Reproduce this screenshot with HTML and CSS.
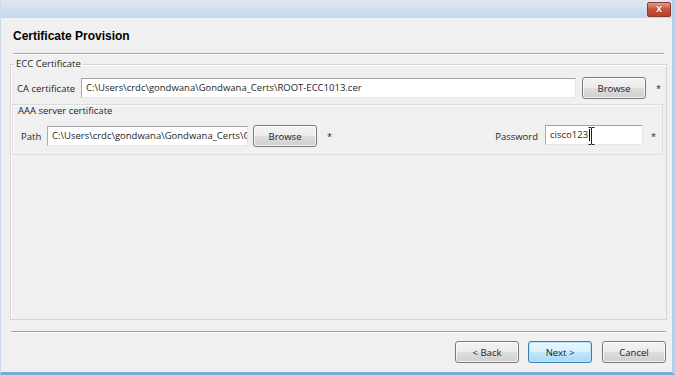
FILE: index.html
```html
<!DOCTYPE html>
<html>
<head>
<meta charset="utf-8">
<link rel="stylesheet" href="styles.css">
</head>
<body>
<div class="window">
  <div class="titlebar">
    <div class="close"><span>x</span></div>
  </div>
  <div class="content">
    <div class="header">Certificate Provision</div>
    <div class="sep top-sep"></div>
    <fieldset class="group">
      <legend>ECC Certificate</legend>
      <div class="row ca-row">
        <span class="label ca-label">CA certificate</span>
        <div class="input ca-input">C:\Users\crdc\gondwana\Gondwana_Certs\ROOT-ECC1013.cer</div>
        <button class="btn browse">Browse</button>
        <span class="star">*</span>
      </div>
      <div class="subgroup">
        <div class="sublabel">AAA server certificate</div>
        <div class="row path-row">
          <span class="label path-label">Path</span>
          <div class="input path-input">C:\Users\crdc\gondwana\Gondwana_Certs\C</div>
          <button class="btn browse">Browse</button>
          <span class="star">*</span>
          <span class="spacer"></span>
          <span class="label pw-label">Password</span>
          <div class="input pw-input">cisco123<span class="caret"></span>
            <svg class="ibeam" width="7" height="18" viewBox="0 0 7 18"><path d="M0.5 0.5h2.5v17h-2.5M6.5 0.5h-2.5v17h2.5" fill="none" stroke="#fff" stroke-width="1.6"/><path d="M0.5 0.5h2.5M4 0.5h2.5M3.5 0.5v17M0.5 17.5h2.5M4 17.5h2.5" fill="none" stroke="#222" stroke-width="1"/></svg>
          </div>
          <span class="star pw-star">*</span>
        </div>
      </div>
    </fieldset>
    <div class="sep bottom-sep"></div>
    <div class="buttons">
      <button class="btn nav">&lt; Back</button>
      <button class="btn nav default">Next &gt;</button>
      <button class="btn nav cancel">Cancel</button>
    </div>
  </div>
</div>
</body>
</html>
```

FILE: styles.css
```css
html, body {
  margin: 0;
  padding: 0;
}
body {
  width: 675px;
  height: 375px;
  overflow: hidden;
  background: #f0f0f0;
  font-family: "Open Sans", "Noto Sans", sans-serif;
  font-size: 9.5px;
  color: #1e1e1e;
}
.window {
  box-sizing: border-box;
  width: 675px;
  height: 375px;
  display: flex;
  flex-direction: column;
  background: #f0f0f0;
  border-left: 1px solid #c9d9ea;
  border-right: 3px solid #b7cfe9;
  border-bottom: 3px solid #78acd9;
}
.titlebar {
  height: 18px;
  flex: none;
  background: linear-gradient(#dfe8f2, #c3d6ec);
  display: flex;
  justify-content: flex-end;
  align-items: flex-start;
}
.close {
  margin-top: 2px;
  margin-right: 1px;
  width: 22px;
  height: 13px;
  border: 1px solid #8b3b2f;
  border-radius: 2px;
  background: linear-gradient(#e39a87, #c7533d 50%, #b8402b);
  display: flex;
  align-items: center;
  justify-content: center;
  color: #fff;
  font-family: "Liberation Sans", sans-serif;
  font-weight: bold;
  font-size: 11px;
  line-height: 1;
}
.close span {
  margin-top: -2px;
  text-shadow: 0 0 1px #6b1d12;
}
.content {
  flex: 1;
  display: flex;
  flex-direction: column;
  padding: 0 5px 0 9px;
}
.header {
  font-family: "Liberation Sans", Arial, sans-serif;
  font-weight: bold;
  font-size: 12px;
  color: #000;
  padding: 11px 0 0 3px;
  height: 17px;
}
.sep {
  border-top: 1px solid #a3a3a3;
  border-bottom: 1px solid #fff;
}
.top-sep {
  margin: 7px 3px 0 3px;
}
.group {
  margin: 3px 0 0 0;
  padding: 0 1px 0 0;
  border: 1px solid #d5d5d5;
  box-shadow: inset 1px 1px 0 #fff;
  height: 262px;
  box-sizing: border-box;
  min-width: 0;
}
.group legend {
  padding: 0 2px;
  margin-left: 3px;
  line-height: 12px;
}
.row {
  display: flex;
  align-items: center;
}
.ca-row {
  margin-top: 7px;
  padding-left: 6px;
  height: 22px;
}
.label {
  white-space: nowrap;
  flex: none;
}
.ca-label {
  width: 64px;
}
.input {
  box-sizing: border-box;
  flex: none;
  height: 20px;
  background: #fff;
  border: 1px solid #abadb3;
  border-top-color: #a0a3aa;
  border-right-color: #e2e3ea;
  border-bottom-color: #e3e9ef;
  padding: 0 4px;
  line-height: 18px;
  white-space: nowrap;
  overflow: hidden;
}
.ca-input {
  width: 495px;
}
.btn {
  box-sizing: border-box;
  flex: none;
  font-family: inherit;
  font-size: 9.5px;
  color: #1e1e1e;
  height: 22px;
  width: 64px;
  border: 1px solid #7a7a7a;
  border-radius: 3px;
  background: linear-gradient(#f3f3f3, #ebebeb 48%, #dddddd 52%, #cfcfcf);
  box-shadow: inset 0 0 0 1px rgba(255,255,255,0.7);
  padding: 0;
}
.browse {
  margin-left: 6px;
}
.star {
  margin-left: 10px;
  font-size: 9px;
}
.subgroup {
  margin: 5px 2px 0 1px;
  height: 51px;
  box-sizing: border-box;
  border: 1px solid #dcdcdc;
  box-shadow: inset 1px 1px 0 #fafafa;
  display: flex;
  flex-direction: column;
}
.sublabel {
  padding: 0 0 0 5px;
  line-height: 13px;
  margin-top: -1px;
}
.path-row {
  margin-top: 8px;
  padding-left: 8px;
  height: 22px;
}
.path-label {
  width: 26px;
}
.path-input {
  width: 201px;
}
.path-row .browse {
  margin-left: 5px;
}
.spacer {
  flex: 1;
}
.pw-label {
  margin-right: 7px;
}
.pw-input {
  width: 98px;
  height: 20px;
  margin-top: -2px;
  position: relative;
  overflow: visible;
}
.caret {
  display: inline-block;
  width: 1px;
  height: 12px;
  background: #000;
  vertical-align: middle;
  margin-left: 1px;
}
.ibeam {
  position: absolute;
  left: 42px;
  top: 1px;
}
.pw-star {
  margin-left: 8px;
  margin-right: 6px;
}
.bottom-sep {
  margin: 11px 1px 0 1px;
}
.buttons {
  display: flex;
  justify-content: flex-end;
  gap: 9px;
  margin-top: 8px;
  padding-right: 1px;
}
.nav {
  height: 22px;
}
.default {
  border-color: #3c7fb1;
  box-shadow: inset 0 0 0 1px #b9e0f5;
  background: linear-gradient(#eaf6fd, #d9f0fc 48%, #bee6fd 52%, #a7d9f5);
}
.cancel {
  margin-left: 1px;
}
```
